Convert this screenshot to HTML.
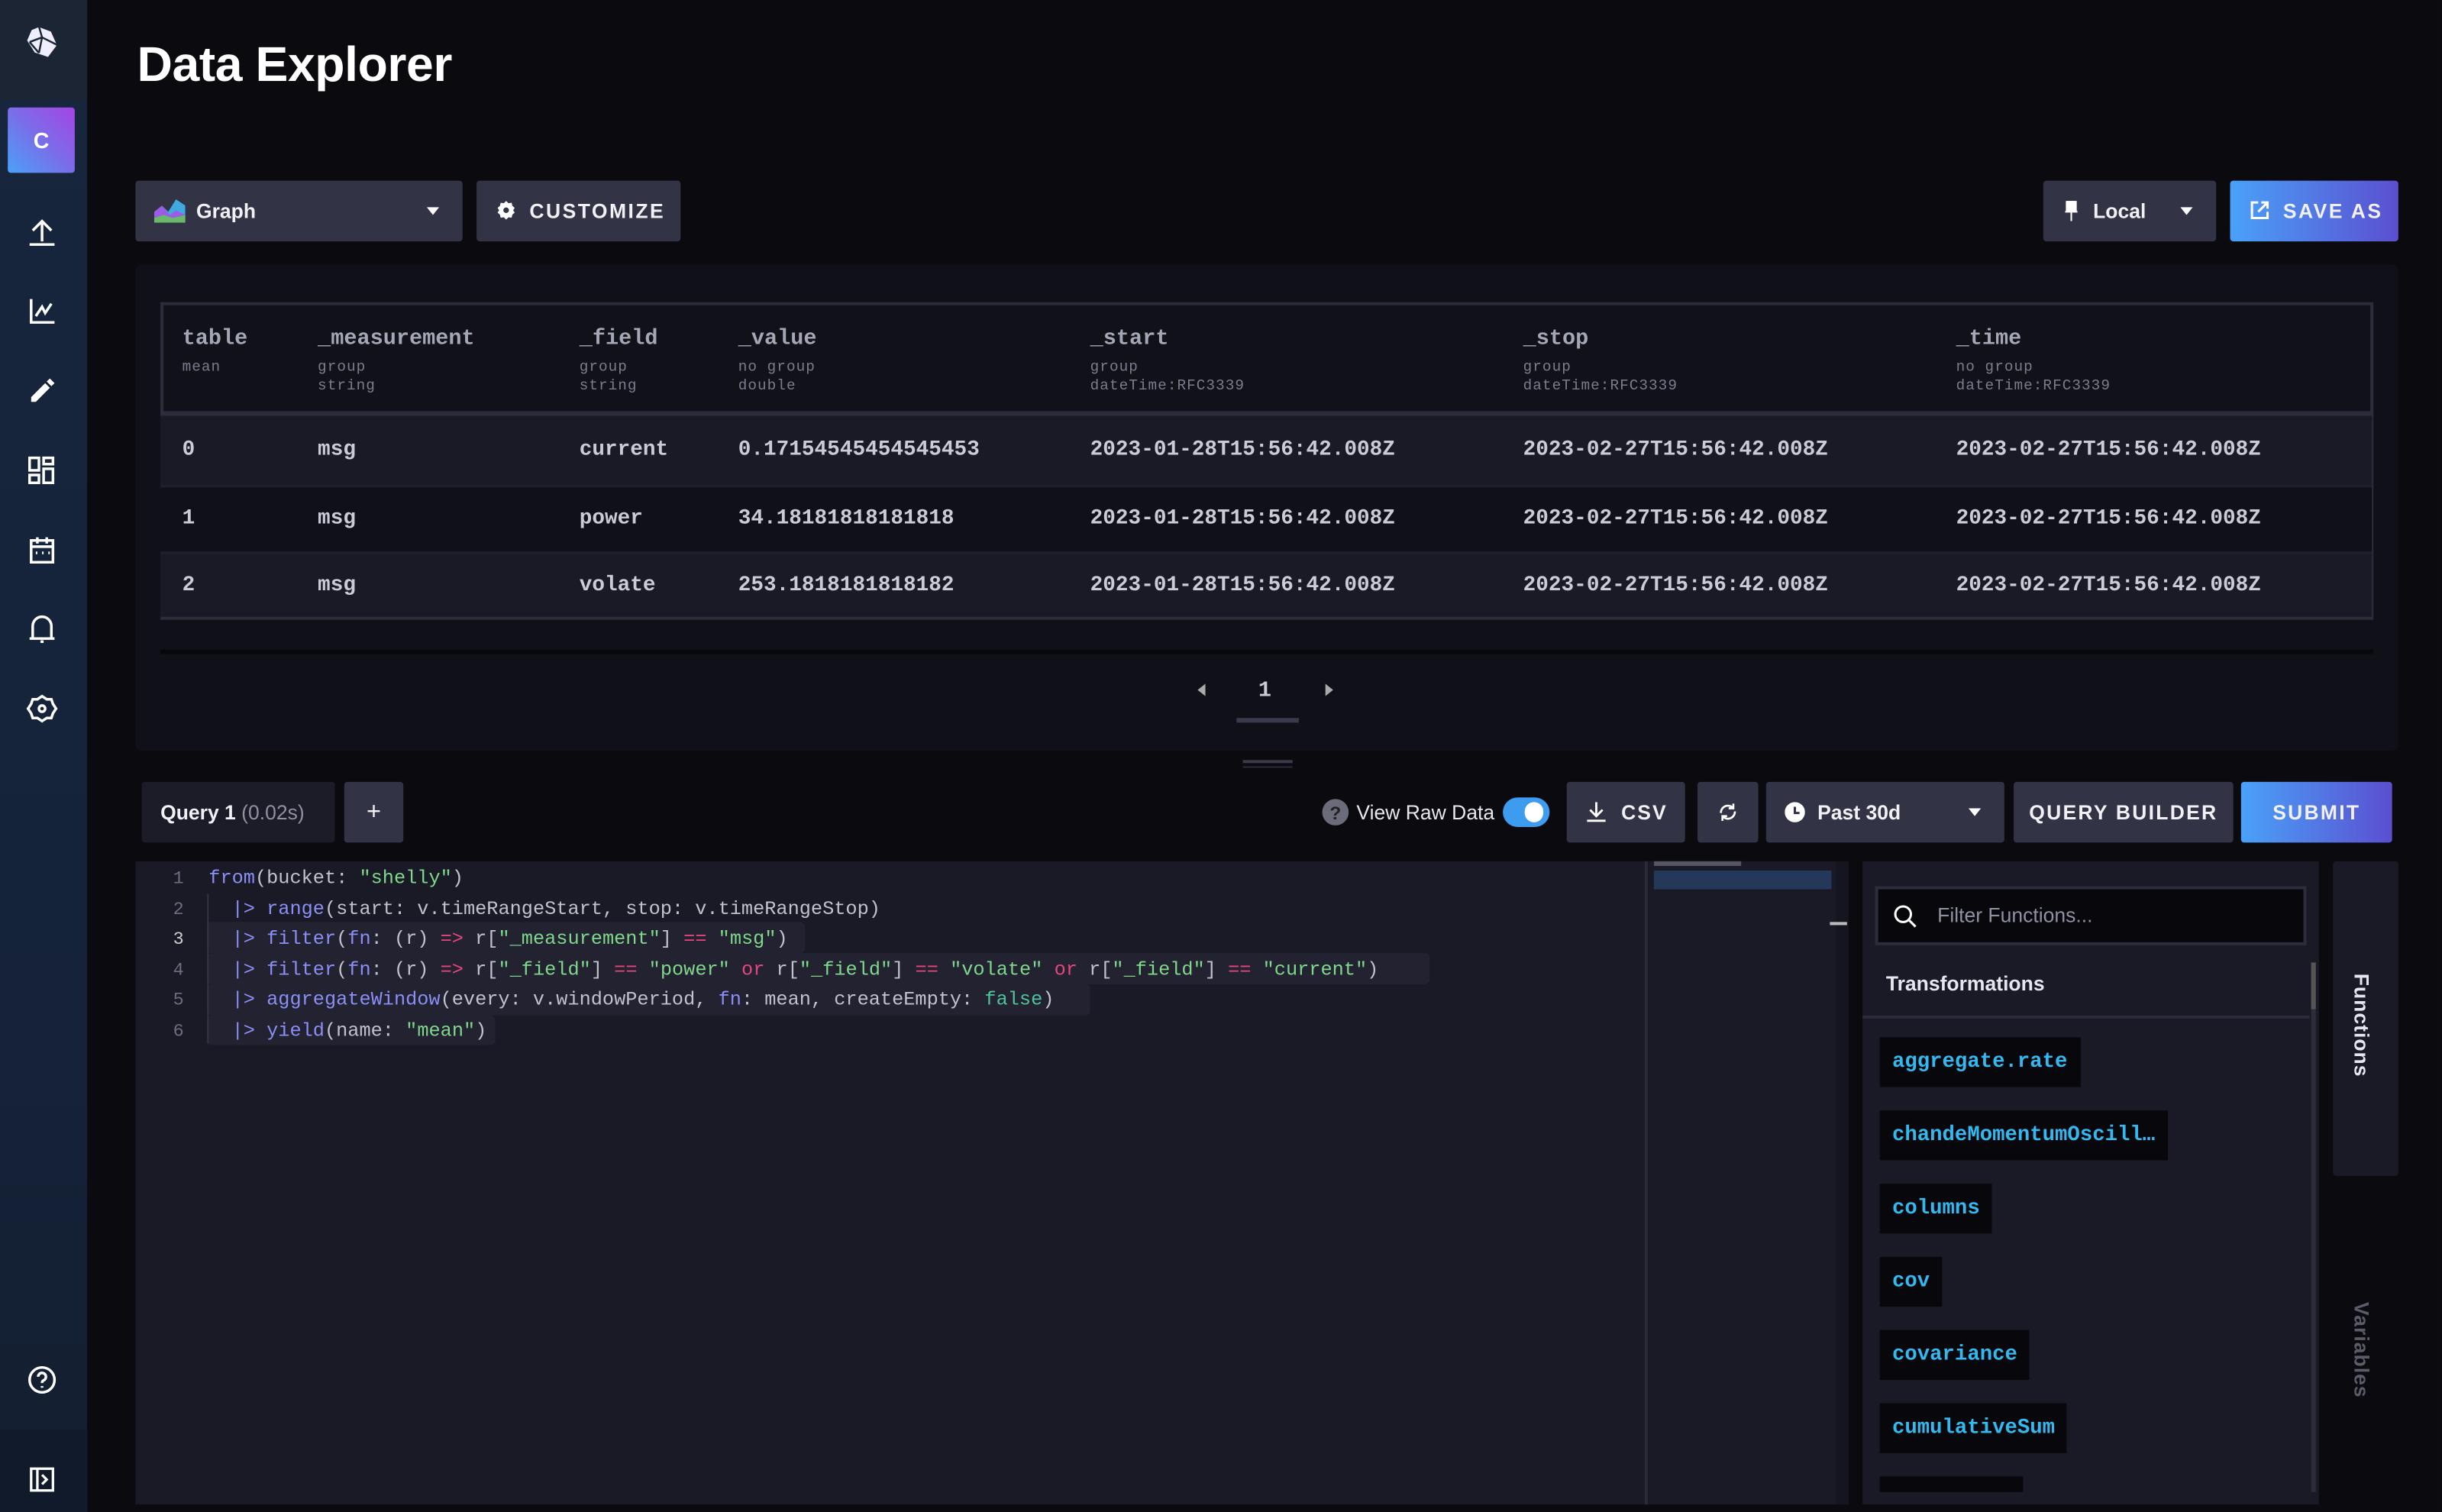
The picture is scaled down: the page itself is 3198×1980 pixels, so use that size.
<!DOCTYPE html>
<html><head><meta charset="utf-8"><style>
*{box-sizing:border-box;margin:0;padding:0}
html,body{width:3198px;height:1980px;overflow:hidden;background:#0a0a0f}
#w{position:absolute;left:0;top:0;width:1568px;height:971px;transform:scale(2.0395);transform-origin:0 0;font-family:"Liberation Sans",sans-serif;color:#e6e6ef;background:#0a0a0f}
.a{position:absolute}
.sb{left:0;top:0;width:56px;height:971px;background:linear-gradient(180deg,#17263d 0%,#15233a 60%,#141e30 100%)}
.btn{position:absolute;background:#333346;border-radius:2px;height:39px;display:flex;align-items:center;font-weight:bold;font-size:13px;color:#f0f0f5}
.mono{font-family:"Liberation Mono",monospace}
.hd{position:absolute;top:210px;font-family:"Liberation Mono",monospace;font-size:14px;font-weight:bold;color:#a4a8b6}
.sub{position:absolute;top:230px;font-family:"Liberation Mono",monospace;font-size:9.5px;line-height:12px;color:#7a7d8c;letter-spacing:.5px}
.row{position:absolute;left:103px;width:1420px;height:44px}
.cell{position:absolute;font-family:"Liberation Mono",monospace;font-size:13.6px;font-weight:bold;color:#c9cbd6;top:14px}
.code{position:absolute;left:134px;font-family:"Liberation Mono",monospace;font-size:12.4px;color:#c0c2cc;white-space:pre}
.ln{position:absolute;left:100px;width:18px;text-align:right;font-family:"Liberation Mono",monospace;font-size:11.5px;color:#6b6e7c}
.k{color:#8b8ff5}.s{color:#7fd88b}.o{color:#e8457c}.f{color:#4fc49a}
.fn{position:absolute;left:1207px;height:32px;background:#07070c;font-family:"Liberation Mono",monospace;font-weight:bold;font-size:13.4px;color:#33b8f0;padding:8px 8px 0 8px}
svg{position:absolute}
</style></head><body><div id="w">
<div class="a sb"></div>
<div class="a" style="left:0;top:0;width:56px;height:64px;background:#1c2533"></div>
<svg style="left:15px;top:15px" width="24" height="24" viewBox="0 0 24 24"><path d="M10 2l8 3 4 9-6 8-9-3-5-8 3-7z" fill="#eef" stroke="#1c2533" stroke-width=".8"/><path d="M10 2l2 7 10 5M12 9l-8 3M12 9l-2 10M4 12l6 7" stroke="#1c2533" stroke-width="1.2" fill="none"/></svg>
<div class="a" style="left:5px;top:69px;width:43px;height:42px;border-radius:2px;background:linear-gradient(225deg,#a544e6,#7a6ee8 50%,#4aa1f8);display:flex;align-items:center;justify-content:center;font-weight:bold;font-size:14px;color:#fff">C</div>
<svg style="left:17px;top:139px" width="20" height="20" viewBox="0 0 20 20" fill="none" stroke="#fff" stroke-width="1.7"><path d="M10 16V3M4 9l6-6 6 6M2 18h16"/></svg>
<svg style="left:17px;top:190px" width="20" height="20" viewBox="0 0 20 20" fill="none" stroke="#fff" stroke-width="1.7"><path d="M3 2v15h15M6 13l4-6 2 4 4-6"/></svg>
<svg style="left:17px;top:241px" width="20" height="20" viewBox="0 0 20 20" fill="#fff"><path d="M3 14l9-9 3 3-9 9H3zM13 4l2-2 3 3-2 2z"/></svg>
<svg style="left:17px;top:292px" width="20" height="20" viewBox="0 0 20 20" fill="none" stroke="#fff" stroke-width="1.7"><rect x="2" y="2" width="6" height="8"/><rect x="11" y="2" width="6" height="4"/><rect x="2" y="13" width="6" height="5"/><rect x="11" y="9" width="6" height="9"/></svg>
<svg style="left:17px;top:343px" width="20" height="20" viewBox="0 0 20 20" fill="none" stroke="#fff" stroke-width="1.7"><rect x="3" y="4" width="14" height="14"/><path d="M3 8h14M7 2v4M13 2v4M6 12h1M10 12h1M14 12h1"/></svg>
<svg style="left:17px;top:394px" width="20" height="20" viewBox="0 0 20 20" fill="none" stroke="#fff" stroke-width="1.7"><path d="M4 16V8a6 6 0 0 1 12 0v8zM2 16h16M9 18h2"/></svg>
<svg style="left:17px;top:445px" width="20" height="20" viewBox="0 0 20 20" fill="none" stroke="#fff" stroke-width="1.7"><path d="M10 2l3 2 3 0 1 3 2 3-2 3-1 3-3 0-3 2-3-2-3 0-1-3-2-3 2-3 1-3 3 0z"/><circle cx="10" cy="10" r="2"/></svg>
<svg style="left:17px;top:876px" width="20" height="20" viewBox="0 0 20 20" fill="none" stroke="#fff" stroke-width="1.7"><circle cx="10" cy="10" r="8"/><path d="M7.5 8a2.5 2.5 0 1 1 3.5 2.3c-.8.4-1 1-1 1.7M10 14v1"/></svg>
<div class="a" style="left:0;top:918px;width:56px;height:53px;background:#111a2a"></div>
<svg style="left:18px;top:941px" width="18" height="18" viewBox="0 0 18 18" fill="none" stroke="#fff" stroke-width="1.6"><rect x="2" y="2" width="14" height="14"/><path d="M6 2v14M9 6l3 3-3 3"/></svg>

<div class="a" style="left:88px;top:23px;font-size:31.5px;font-weight:bold;color:#fff;letter-spacing:-.2px">Data Explorer</div>

<div class="btn" style="left:87px;top:116px;width:210px"><svg style="left:12px;top:12px" width="20" height="15" viewBox="0 0 20 15"><path d="M0 15V9l5-5 4 4 5-8 6 4v11z" fill="#3fa9e0"/><path d="M0 15V8l5-4 5 6 4-3 6 3v5z" fill="#9b5de5"/><path d="M0 15v-3l6-2 6 2 8-2v5z" fill="#6ab86a"/></svg><span style="margin-left:39px">Graph</span><svg style="left:187px;top:17px" width="8" height="5"><path d="M0 0h8L4 5z" fill="#fff"/></svg></div>
<div class="btn" style="left:306px;top:116px;width:131px;letter-spacing:1.2px"><svg style="left:13px;top:13px" width="12" height="12" viewBox="0 0 12 12"><path d="M6 0l1.5 1.5 2-.3.5 2 1.5 1.3-1 1.5 1 1.5-1.5 1.3-.5 2-2-.3L6 12l-1.5-1.5-2 .3-.5-2L.5 7.5l1-1.5-1-1.5L2 3.2l.5-2 2 .3z" fill="#fff"/><circle cx="6" cy="6" r="1.8" fill="#333346"/></svg><span style="margin-left:34px">CUSTOMIZE</span></div>
<div class="btn" style="left:1312px;top:116px;width:111px"><svg style="left:14px;top:13px" width="8" height="13"><path d="M1 0h6v7H1zM0 7h8M4 7v6" stroke="#fff" fill="#fff" stroke-width="1"/></svg><span style="margin-left:32px">Local</span><svg style="left:88px;top:17px" width="8" height="5"><path d="M0 0h8L4 5z" fill="#fff"/></svg></div>
<div class="btn" style="left:1432px;top:116px;width:108px;background:linear-gradient(90deg,#4aa1f8,#5b4fd0);letter-spacing:1.2px"><svg style="left:13px;top:13px" width="12" height="12" fill="none" stroke="#fff" stroke-width="1.5"><path d="M5 1H1v10h10V7M7 1h4v4M11 1L5 7"/></svg><span style="margin-left:34px">SAVE AS</span></div>

<div class="a" style="left:87px;top:170px;width:1453px;height:312px;background:#101018;border-radius:4px"></div>
<div class="a" style="left:103px;top:194px;width:1421px;height:204px;border:2px solid #2c2c3a;background:#111119"></div>
<div class="hd" style="left:117px">table</div><div class="sub" style="left:117px">mean</div>
<div class="hd" style="left:204px">_measurement</div><div class="sub" style="left:204px">group<br>string</div>
<div class="hd" style="left:372px">_field</div><div class="sub" style="left:372px">group<br>string</div>
<div class="hd" style="left:474px">_value</div><div class="sub" style="left:474px">no group<br>double</div>
<div class="hd" style="left:700px">_start</div><div class="sub" style="left:700px">group<br>dateTime:RFC3339</div>
<div class="hd" style="left:978px">_stop</div><div class="sub" style="left:978px">group<br>dateTime:RFC3339</div>
<div class="hd" style="left:1256px">_time</div><div class="sub" style="left:1256px">no group<br>dateTime:RFC3339</div>
<div class="a" style="left:103px;top:264px;width:1421px;height:3px;background:#2c2c3a"></div>
<div class="row" style="top:267px;background:#1a1a26"></div>
<div class="row" style="top:311px;background:#101018;border-top:2px solid #1f1f2c"></div>
<div class="row" style="top:354px;height:42px;background:#1a1a26;border-top:2px solid #1f1f2c"></div>
<div class="cell" style="left:117px;top:282px">0</div><div class="cell" style="left:204px;top:282px">msg</div><div class="cell" style="left:372px;top:282px">current</div><div class="cell" style="left:474px;top:282px">0.17154545454545453</div><div class="cell" style="left:700px;top:282px">2023-01-28T15:56:42.008Z</div><div class="cell" style="left:978px;top:282px">2023-02-27T15:56:42.008Z</div><div class="cell" style="left:1256px;top:282px">2023-02-27T15:56:42.008Z</div>
<div class="cell" style="left:117px;top:326px">1</div><div class="cell" style="left:204px;top:326px">msg</div><div class="cell" style="left:372px;top:326px">power</div><div class="cell" style="left:474px;top:326px">34.18181818181818</div><div class="cell" style="left:700px;top:326px">2023-01-28T15:56:42.008Z</div><div class="cell" style="left:978px;top:326px">2023-02-27T15:56:42.008Z</div><div class="cell" style="left:1256px;top:326px">2023-02-27T15:56:42.008Z</div>
<div class="cell" style="left:117px;top:369px">2</div><div class="cell" style="left:204px;top:369px">msg</div><div class="cell" style="left:372px;top:369px">volate</div><div class="cell" style="left:474px;top:369px">253.1818181818182</div><div class="cell" style="left:700px;top:369px">2023-01-28T15:56:42.008Z</div><div class="cell" style="left:978px;top:369px">2023-02-27T15:56:42.008Z</div><div class="cell" style="left:1256px;top:369px">2023-02-27T15:56:42.008Z</div>
<div class="a" style="left:103px;top:417px;width:1421px;height:3px;background:#08080c"></div>
<svg style="left:769px;top:439px" width="6" height="8"><path d="M5 0v8L0 4z" fill="#aaa"/></svg>
<div class="a mono" style="left:808px;top:436px;font-size:14px;font-weight:bold;color:#c9cbd6">1</div>
<svg style="left:851px;top:439px" width="6" height="8"><path d="M0 0v8l5-4z" fill="#aaa"/></svg>
<div class="a" style="left:794px;top:461px;width:40px;height:3px;background:#3a3a4c"></div>
<div class="a" style="left:798px;top:488px;width:32px;height:2px;background:#3a3a4c"></div>
<div class="a" style="left:798px;top:492px;width:32px;height:1px;background:#2a2a38"></div>

<div class="btn" style="left:91px;top:502px;width:124px;background:#1c1c28;font-size:13px"><span style="margin-left:12px">Query 1 <span style="color:#8e91a0;font-weight:normal">(0.02s)</span></span></div>
<div class="btn" style="left:221px;top:502px;width:38px;justify-content:center;font-size:16px;font-weight:normal">+</div>
<svg style="left:849px;top:513px" width="17" height="17"><circle cx="8.5" cy="8.5" r="8.5" fill="#6b6c7a"/><text x="8.5" y="13" font-size="12" font-weight="bold" text-anchor="middle" fill="#222" font-family="Liberation Sans">?</text></svg>
<div class="a" style="left:871px;top:514px;font-size:13px;color:#e6e6ef">View Raw Data</div>
<div class="a" style="left:965px;top:512px;width:30px;height:19px;border-radius:10px;background:#3d9bf0"><div class="a" style="left:14px;top:3px;width:12px;height:13px;border-radius:6px;background:#fff"></div></div>
<div class="btn" style="left:1006px;top:502px;width:76px;letter-spacing:1px"><svg style="left:13px;top:13px" width="12" height="13" fill="none" stroke="#fff" stroke-width="1.4"><path d="M6 0v9M2 5l4 4 4-4M0 12h12"/></svg><span style="margin-left:35px">CSV</span></div>
<div class="btn" style="left:1090px;top:502px;width:39px"><svg style="left:13px;top:13px" width="13" height="13" fill="none" stroke="#fff" stroke-width="1.3"><path d="M2 7a4.5 4.5 0 0 1 8-3M11 6a4.5 4.5 0 0 1-8 3M10 1v3H7M3 12V9h3"/></svg></div>
<div class="btn" style="left:1134px;top:502px;width:153px"><svg style="left:12px;top:13px" width="13" height="13"><circle cx="6.5" cy="6.5" r="6.5" fill="#fff"/><path d="M6.5 3v4h3" stroke="#333346" stroke-width="1.5" fill="none"/></svg><span style="margin-left:33px">Past 30d</span><svg style="left:130px;top:17px" width="8" height="5"><path d="M0 0h8L4 5z" fill="#fff"/></svg></div>
<div class="btn" style="left:1293px;top:502px;width:141px;justify-content:center;letter-spacing:1.1px">QUERY BUILDER</div>
<div class="btn" style="left:1439px;top:502px;width:97px;justify-content:center;letter-spacing:1.1px;background:linear-gradient(90deg,#4aa1f8,#5b4fd0)">SUBMIT</div>

<div class="a" style="left:87px;top:553px;width:1099px;height:413px;background:#1a1a26"></div>
<div class="a" style="left:133px;top:592px;width:140px;height:20px;background:#222230;border-radius:3px"></div>
<div class="a" style="left:133px;top:612px;width:785px;height:20px;background:#222230;border-radius:3px"></div>
<div class="a" style="left:133px;top:632px;width:567px;height:20px;background:#222230;border-radius:3px"></div>
<div class="a" style="left:133px;top:652px;width:185px;height:19px;background:#222230;border-radius:3px"></div>
<div class="a" style="left:133px;top:592px;width:384px;height:20px;background:#222230;border-radius:3px"></div>
<div class="a" style="left:133px;top:574px;width:1px;height:96px;background:#333342"></div>
<div class="a" style="left:1056px;top:553px;width:2px;height:413px;background:#2b2b38"></div>
<div class="a" style="left:1179px;top:553px;width:8px;height:413px;background:#15151f"></div>
<div class="a" style="left:1175px;top:592px;width:11px;height:2px;background:#bbb"></div>
<div class="a" style="left:1062px;top:559px;width:114px;height:12px;background:#24385a"></div>
<div class="a" style="left:1062px;top:553px;width:56px;height:3px;background:#556"></div>
<div class="ln" style="top:558px">1</div><div class="ln" style="top:578px">2</div><div class="ln" style="top:597px;color:#ccc">3</div><div class="ln" style="top:617px">4</div><div class="ln" style="top:636px">5</div><div class="ln" style="top:656px">6</div>
<div class="code" style="top:557px"><span class="k">from</span>(bucket: <span class="s">"shelly"</span>)</div>
<div class="code" style="top:577px">  <span class="k">|&gt; range</span>(start: v.timeRangeStart, stop: v.timeRangeStop)</div>
<div class="code" style="top:596px">  <span class="k">|&gt; filter</span>(<span class="k">fn</span>: (r) <span class="o">=&gt;</span> r[<span class="s">"_measurement"</span>] <span class="o">==</span> <span class="s">"msg"</span>)</div>
<div class="code" style="top:616px">  <span class="k">|&gt; filter</span>(<span class="k">fn</span>: (r) <span class="o">=&gt;</span> r[<span class="s">"_field"</span>] <span class="o">==</span> <span class="s">"power"</span> <span class="o">or</span> r[<span class="s">"_field"</span>] <span class="o">==</span> <span class="s">"volate"</span> <span class="o">or</span> r[<span class="s">"_field"</span>] <span class="o">==</span> <span class="s">"current"</span>)</div>
<div class="code" style="top:635px">  <span class="k">|&gt; aggregateWindow</span>(every: v.windowPeriod, <span class="k">fn</span>: mean, createEmpty: <span class="f">false</span>)</div>
<div class="code" style="top:655px">  <span class="k">|&gt; yield</span>(name: <span class="s">"mean"</span>)</div>

<div class="a" style="left:1196px;top:553px;width:293px;height:413px;background:#1a1a26"></div>
<div class="a" style="left:1204px;top:569px;width:277px;height:38px;background:#07070c;border:2px solid #2c2c3a"></div>
<svg style="left:1216px;top:581px" width="15" height="15" fill="none" stroke="#fff" stroke-width="1.5"><circle cx="6" cy="6" r="5"/><path d="M10 10l4 4"/></svg>
<div class="a" style="left:1244px;top:580px;font-size:13px;color:#8e91a0">Filter Functions...</div>
<div class="a" style="left:1211px;top:624px;font-size:13px;font-weight:bold;color:#e6e6ef">Transformations</div>
<div class="a" style="left:1196px;top:652px;width:287px;height:2px;background:#2c2c3a"></div>
<div class="a" style="left:1484px;top:618px;width:3px;height:340px;background:#2c2c3a"></div>
<div class="a" style="left:1484px;top:618px;width:3px;height:30px;background:#555"></div>
<div class="fn" style="top:666px;padding-top:9px">aggregate.rate</div>
<div class="fn" style="top:713px;padding-top:9px">chandeMomentumOscill…</div>
<div class="fn" style="top:760px;padding-top:9px">columns</div>
<div class="fn" style="top:807px;padding-top:9px">cov</div>
<div class="fn" style="top:854px;padding-top:9px">covariance</div>
<div class="fn" style="top:901px;padding-top:9px">cumulativeSum</div>
<div class="fn" style="top:948px;width:92px;height:10px;padding:0"></div>
<div class="a" style="left:1498px;top:553px;width:42px;height:202px;background:#1a1a26;border-radius:2px"></div>
<div class="a" style="left:1509px;top:625px;writing-mode:vertical-rl;font-size:13px;font-weight:bold;color:#e6e6ef;letter-spacing:.5px">Functions</div>
<div class="a" style="left:1509px;top:836px;writing-mode:vertical-rl;font-size:13px;font-weight:bold;color:#5a5c6a;letter-spacing:.5px">Variables</div>
</div></body></html>
